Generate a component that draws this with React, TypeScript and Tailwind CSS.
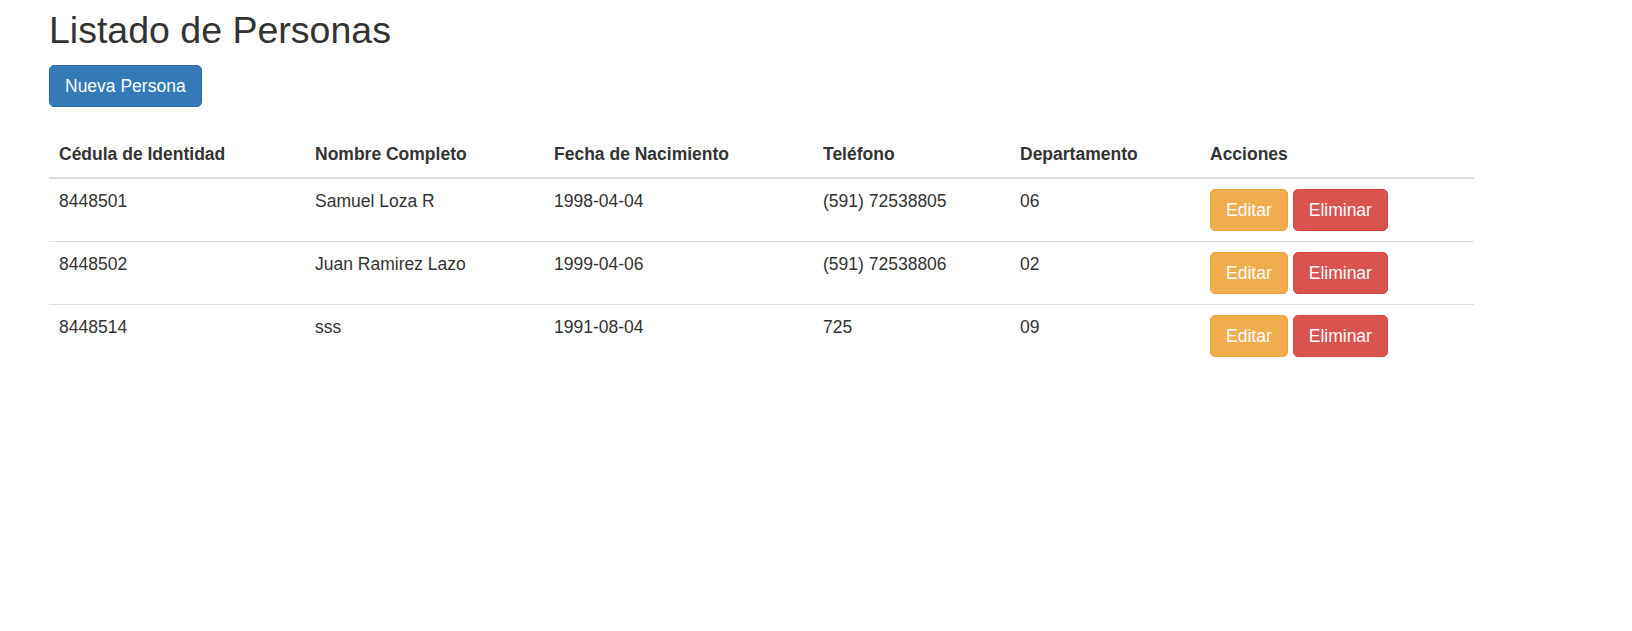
import React from "react";

const rows = [
  { ci: "8448501", nombre: "Samuel Loza R", fecha: "1998-04-04", tel: "(591) 72538805", dep: "06" },
  { ci: "8448502", nombre: "Juan Ramirez Lazo", fecha: "1999-04-06", tel: "(591) 72538806", dep: "02" },
  { ci: "8448514", nombre: "sss", fecha: "1991-08-04", tel: "725", dep: "09" },
];

export default function App() {
  return (
    <div className="min-h-screen bg-white text-[#333] pl-[49px]" style={{ fontFamily: '"Liberation Sans", Arial, Helvetica, sans-serif' }}>
      <h2 className="pt-[10px] text-[37.5px] leading-[41px] font-normal text-[#333]">Listado de Personas</h2>
      <div className="mt-[14px]">
        <button className="h-[42px] px-[15px] border border-[#2e6da4] bg-[#337ab7] text-white text-[17.5px] leading-[25px] rounded-[5px]">
          Nueva Persona
        </button>
      </div>
      <table className="mt-[25px] w-[1425px] table-fixed border-separate border-spacing-0 text-[17.5px] leading-[25px]">
        <colgroup>
          <col className="w-[256px]" />
          <col className="w-[239px]" />
          <col className="w-[269px]" />
          <col className="w-[197px]" />
          <col className="w-[190px]" />
          <col className="w-[274px]" />
        </colgroup>
        <thead>
          <tr>
            {["Cédula de Identidad", "Nombre Completo", "Fecha de Nacimiento", "Teléfono", "Departamento", "Acciones"].map((h) => (
              <th key={h} className="text-left font-bold px-[10px] py-[10px] border-b-2 border-[#ddd] align-bottom">
                {h}
              </th>
            ))}
          </tr>
        </thead>
        <tbody>
          {rows.map((r, i) => {
            const b = i === 0 ? "" : "border-t border-[#ddd]";
            return (
              <tr key={r.ci}>
                <td className={`px-[10px] py-[10px] align-top ${b}`}>{r.ci}</td>
                <td className={`px-[10px] py-[10px] align-top ${b}`}>{r.nombre}</td>
                <td className={`px-[10px] py-[10px] align-top ${b}`}>{r.fecha}</td>
                <td className={`px-[10px] py-[10px] align-top ${b}`}>{r.tel}</td>
                <td className={`px-[10px] py-[10px] align-top ${b}`}>{r.dep}</td>
                <td className={`px-[10px] py-[10px] align-top ${b}`}>
                  <div className="flex gap-[5px]">
                    <button className="h-[42px] px-[15px] border border-[#eea236] bg-[#f0ad4e] text-white text-[17.5px] leading-[25px] rounded-[5px]">
                      Editar
                    </button>
                    <button className="h-[42px] px-[15px] border border-[#d43f3a] bg-[#d9534f] text-white text-[17.5px] leading-[25px] rounded-[5px]">
                      Eliminar
                    </button>
                  </div>
                </td>
              </tr>
            );
          })}
        </tbody>
      </table>
    </div>
  );
}
